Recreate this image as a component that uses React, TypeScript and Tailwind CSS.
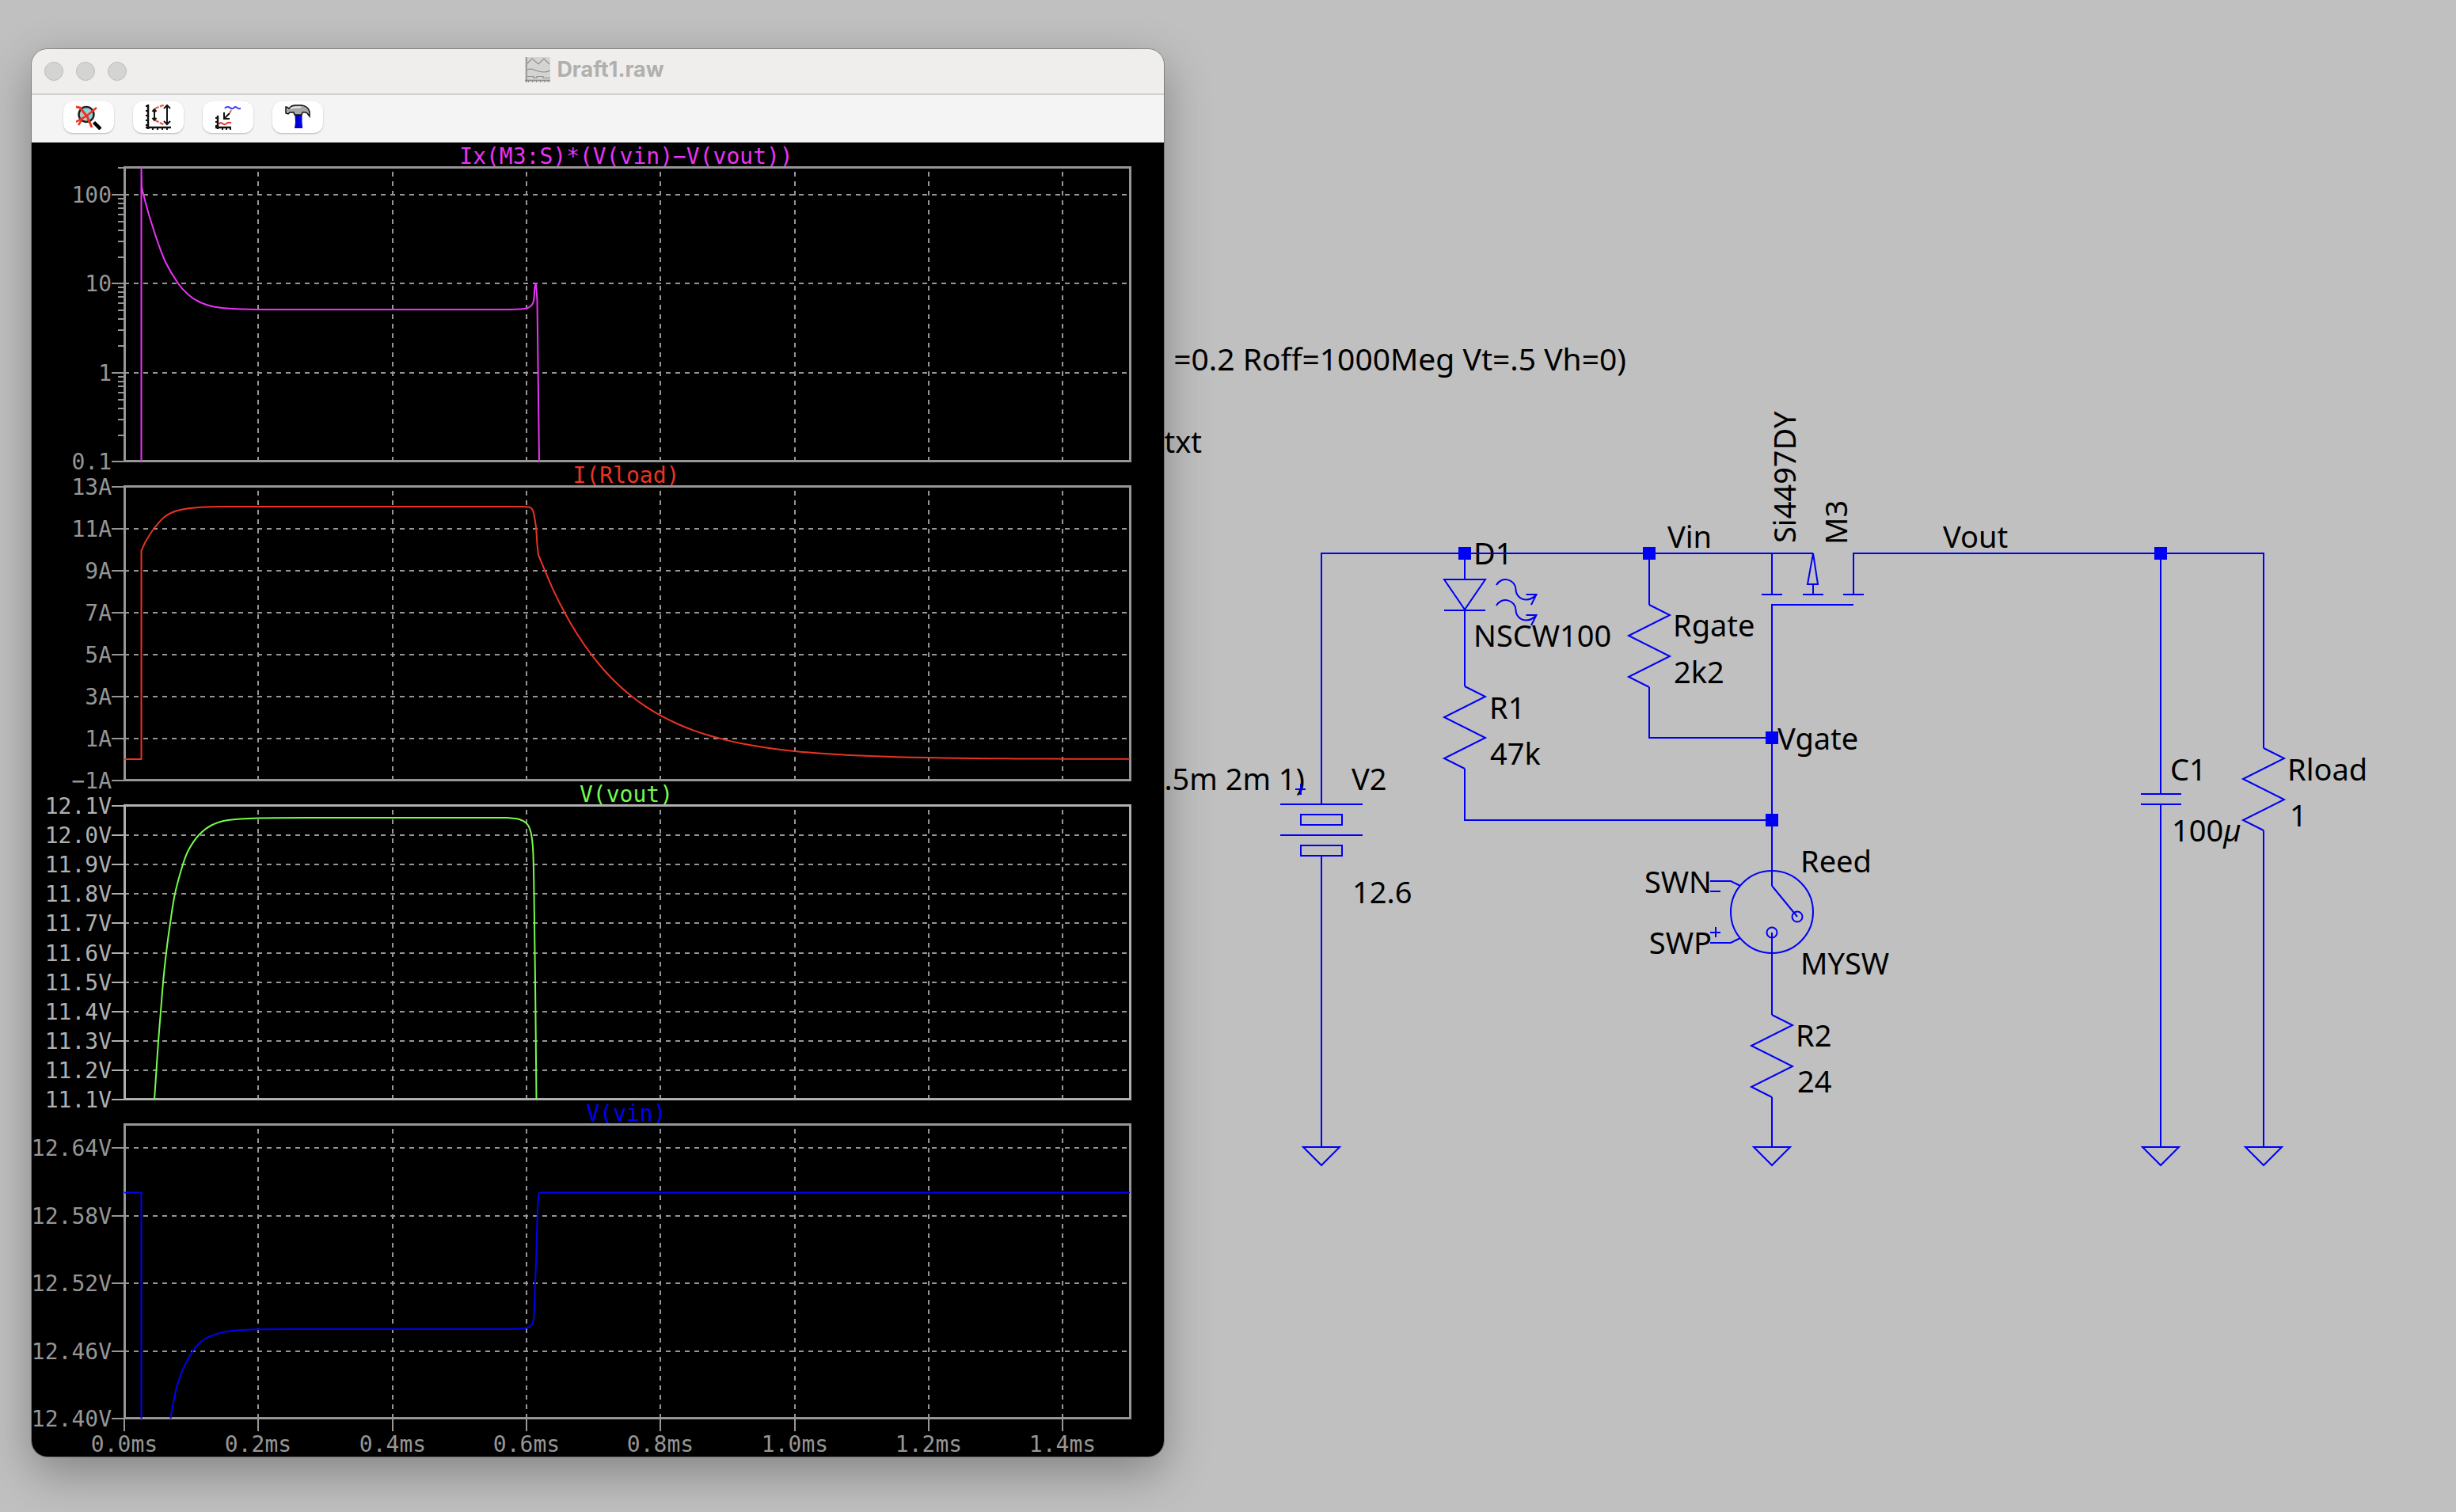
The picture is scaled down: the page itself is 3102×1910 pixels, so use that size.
import type { ReactNode } from "react";

type Point = [number, number];

type Plot = {
  title: string;
  color: string;
  frame: string;
  top: number;
  ticks: { label: string; y: number }[];
  minor?: number[];
  trace: string;
};

const LEFT = 157;
const RIGHT = 1427;
const HEIGHT = 371;
const MS = (RIGHT - LEFT) / 1.5;

// catmull-rom through the points, as cubic segments
function smooth(points: Point[]) {
  let d = "";
  for (let i = 0; i < points.length - 1; i++) {
    const a = points[i - 1] ?? points[i];
    const b = points[i];
    const c = points[i + 1];
    const e = points[i + 2] ?? c;
    d += ` L${b[0]} ${b[1]} C${b[0] + (c[0] - a[0]) / 6} ${b[1] + (c[1] - a[1]) / 6} ${
      c[0] - (e[0] - b[0]) / 6
    } ${c[1] - (e[1] - b[1]) / 6} ${c[0]} ${c[1]}`;
  }
  return d;
}

function linearTicks(labels: string[], first: number, step: number) {
  return labels.map((label, i) => ({ label, y: Math.round(first + i * step) }));
}

// load current falls off exponentially once the switch opens
const decay: Point[] = Array.from({ length: 39 }, (_, i) => {
  const x = 680 + i * 19.66;
  return [x, 959 - 258 * Math.exp((680 - x) / 100)];
});

const minorTicks = [246, 358, 471].flatMap((y) =>
  [2, 3, 4, 5, 6, 7, 8, 9].map((n) => y + 112.4 * (1 - Math.log10(n))),
);

const plots: Plot[] = [
  {
    title: "Ix(M3:S)*(V(vin)−V(vout))",
    color: "#ea33f7",
    frame: "#969696",
    top: 212,
    ticks: linearTicks(["100", "10", "1", "0.1"], 246, 112.4),
    minor: minorTicks,
    trace:
      "M178.5 583 V212 L179 236" +
      smooth([
        [179, 236], [180.5, 243], [186, 264], [193, 287], [200, 308], [210, 333], [225, 358],
        [237, 371.5], [250, 380.5], [267, 386.7], [290, 389.7], [326, 391], [400, 391],
      ]) +
      " H640" +
      smooth([[640, 391], [656, 390.5], [665, 389.5], [671, 386], [674, 380], [675.5, 363], [677, 358]]) +
      " L678.5 380 L681 583",
  },
  {
    title: "I(Rload)",
    color: "#ea3323",
    frame: "#969696",
    top: 615,
    ticks: linearTicks(["13A", "11A", "9A", "7A", "5A", "3A", "1A", "−1A"], 615, 53),
    trace:
      "M157 959 H178.5 V696" +
      smooth([
        [178.5, 696], [184.5, 683], [195, 667], [209, 652], [226, 644.5], [250, 641],
        [279, 640], [336, 640],
      ]) +
      " H656" +
      smooth([[656, 640], [668, 640.5], [672, 643], [674, 648], [677, 666], [678.5, 688], [680, 701]]) +
      smooth(decay),
  },
  {
    title: "V(vout)",
    color: "#75fb4c",
    frame: "#b0b0b0",
    top: 1018,
    ticks: linearTicks(
      ["12.1V", "12.0V", "11.9V", "11.8V", "11.7V", "11.6V", "11.5V", "11.4V", "11.3V", "11.2V", "11.1V"],
      1018,
      37.1,
    ),
    trace:
      "M195 1389" +
      smooth([
        [195, 1389], [197.5, 1352], [200, 1315], [203, 1278], [206, 1241], [210, 1203],
        [215, 1166], [221, 1129], [231, 1092], [238, 1074], [251, 1055], [267, 1042.5],
        [288, 1036], [326, 1033.5], [400, 1033],
      ]) +
      " H640" +
      smooth([
        [640, 1033], [656, 1035], [665, 1040], [669.5, 1048], [672, 1060], [673.5, 1080],
        [674.5, 1129], [676, 1241], [677.5, 1389],
      ]),
  },
  {
    title: "V(vin)",
    color: "#0000f5",
    frame: "#969696",
    top: 1421,
    ticks: linearTicks(["12.64V", "12.58V", "12.52V", "12.46V", "12.40V"], 1450, 85.5),
    trace:
      "M157 1506.5 H178.5 V1792 M215.5 1792" +
      smooth([
        [215.5, 1792], [218, 1777], [223, 1753], [231, 1730], [244, 1706], [257, 1692.5],
        [274, 1685], [293, 1681], [326, 1679.2], [400, 1679],
      ]) +
      " H640" +
      smooth([
        [640, 1679], [656, 1678.5], [665, 1677.5], [671, 1674], [674, 1665], [675.5, 1633],
        [677.5, 1580], [679, 1527], [680.5, 1509], [682, 1506.5],
      ]) +
      " H1427",
  },
];

const times = ["0.0ms", "0.2ms", "0.4ms", "0.6ms", "0.8ms", "1.0ms", "1.2ms", "1.4ms"];

function PlotPane({ plot }: { plot: Plot }) {
  const bottom = plot.top + HEIGHT;
  return (
    <g>
      <text x={791} y={plot.top - 5} textAnchor="middle" fill={plot.color}>
        {plot.title}
      </text>
      <g stroke="#969696" strokeWidth="2" strokeDasharray="6 6">
        {times.slice(1).map((t, i) => {
          const x = Math.round(LEFT + (i + 1) * 0.2 * MS);
          return <path key={t} d={`M${x} ${bottom} V${plot.top}`} />;
        })}
        {plot.ticks
          .filter((t) => t.y > plot.top + 4 && t.y < bottom - 4)
          .map((t) => (
            <path key={t.label} d={`M${LEFT} ${t.y} H${RIGHT}`} />
          ))}
      </g>
      <g stroke={plot.frame} strokeWidth="2">
        {plot.ticks.map((t) => (
          <path key={t.label} d={`M141 ${t.y} H${LEFT}`} />
        ))}
        {plot.minor?.map((y) => <path key={y} d={`M149 ${Math.round(y)} H${LEFT}`} />)}
        {plot.minor && <path d={`M149 ${plot.top} H${LEFT}`} />}
      </g>
      <g fill={plot.frame} textAnchor="end">
        {plot.ticks.map((t) => (
          <text key={t.label} x={141} y={t.y + 10}>
            {t.label}
          </text>
        ))}
      </g>
      <rect
        x={LEFT + 0.5}
        y={plot.top - 0.5}
        width={RIGHT - LEFT}
        height={HEIGHT}
        fill="none"
        stroke={plot.frame}
        strokeWidth="3"
      />
      <path d={plot.trace} fill="none" stroke={plot.color} strokeWidth="2" strokeLinejoin="round" />
    </g>
  );
}

function Waveforms() {
  return (
    <svg
      viewBox="40 180 1430 1660"
      className="block h-auto w-full bg-black font-['DejaVu_Sans_Mono',monospace] text-[28px]"
      role="img"
      aria-label="Simulation waveforms"
    >
      {plots.map((plot) => (
        <PlotPane key={plot.title} plot={plot} />
      ))}
      {times.map((t, i) => {
        const x = Math.round(LEFT + i * 0.2 * MS);
        return (
          <g key={t}>
            <path d={`M${x} 1792 V1808`} stroke="#969696" strokeWidth="2" />
            <text x={x} y={1834} textAnchor="middle" fill="#969696">
              {t}
            </text>
          </g>
        );
      })}
    </svg>
  );
}

function Resistor({ x, y }: { x: number; y: number }) {
  return <path d={`M${x} ${y} l26 13 l-52 26 l52 26 l-52 26 l26 13`} />;
}

function Ground({ x }: { x: number }) {
  return <path d={`M${x - 23} 1449 H${x + 23} L${x} 1472 Z`} />;
}

const junctions: Point[] = [
  [1850, 699],
  [2083, 699],
  [2729, 699],
  [2238, 932],
  [2238, 1036],
];

const labels: { text: string; x: number; y: number; end?: boolean }[] = [
  { text: "txt", x: 1518, y: 572, end: true },
  { text: ".5m 2m 1)", x: 1648, y: 998, end: true },
  { text: "V2", x: 1707, y: 998 },
  { text: "12.6", x: 1708, y: 1141 },
  { text: "D1", x: 1861, y: 713 },
  { text: "NSCW100", x: 1861, y: 817 },
  { text: "R1", x: 1881, y: 908 },
  { text: "47k", x: 1882, y: 966 },
  { text: "Vin", x: 2106, y: 692 },
  { text: "Rgate", x: 2113, y: 804 },
  { text: "2k2", x: 2114, y: 863 },
  { text: "Vgate", x: 2245, y: 947 },
  { text: "Vout", x: 2454, y: 692 },
  { text: "SWN", x: 2162, y: 1128, end: true },
  { text: "SWP", x: 2162, y: 1205, end: true },
  { text: "Reed", x: 2274, y: 1102 },
  { text: "MYSW", x: 2274, y: 1231 },
  { text: "R2", x: 2268, y: 1322 },
  { text: "24", x: 2270, y: 1380 },
  { text: "C1", x: 2741, y: 986 },
  { text: "Rload", x: 2889, y: 986 },
  { text: "1", x: 2892, y: 1044 },
];

function Schematic() {
  return (
    <svg
      viewBox="0 0 3102 1910"
      className="col-start-1 row-start-1 block h-auto w-full font-['Noto_Sans',sans-serif] text-[38px]"
      role="img"
      aria-label="Circuit schematic"
    >
      <g fill="#000">
        <text x={2054} y={468} textAnchor="end" className="text-[39px]">
          =0.2 Roff=1000Meg Vt=.5 Vh=0)
        </text>
        {labels.map((l) => (
          <text key={l.text} x={l.x} y={l.y} textAnchor={l.end ? "end" : "start"}>
            {l.text}
          </text>
        ))}
        <text x={2743} y={1063}>
          100<tspan fontStyle="italic">µ</tspan>
        </text>
        <text transform="translate(2268 686) rotate(-90)">Si4497DY</text>
        <text transform="translate(2333 688) rotate(-90)">M3</text>
      </g>

      <g fill="none" stroke="#0000f5" strokeWidth="2">
        {/* supply rail and battery */}
        <path d="M1669 1016 V699 H2290 M1669 1081 V1449" />
        <path d="M1617 1016 H1721 M1643 1029 H1695 V1042 H1643 Z M1617 1055 H1721 M1643 1068 H1695 V1081 H1643 Z" />
        <path d="M1636 997 H1649 M1643 990 V1004" />

        {/* D1 */}
        <path d="M1850 699 V732 M1824 732 H1876 L1850 770 Z M1824 771 H1876 M1850 770 V867" />
        {[0, 26].map((dy) => (
          <path
            key={dy}
            transform={`translate(0 ${dy})`}
            d="M1890 739 A13 13 0 0 1 1914.5 744.5 A13 13 0 0 0 1927.5 757.5 Q1935 757.5 1940.5 751 M1927.5 751 H1940.5 L1934 764"
          />
        ))}
        <Resistor x={1850} y={867} />
        <path d="M1850 971 V1036 H2238" />

        {/* gate pull-up */}
        <path d="M2083 699 V764 M2083 868 V932 H2238" />
        <Resistor x={2083} y={764} />

        {/* M3 */}
        <path d="M2238 699 V751 M2225 751 H2251 M2277 751 H2303 M2328 751 H2354 M2341 764 H2238 V1119" />
        <path d="M2290 699 L2283 738 H2296 Z M2290 738 V751 M2341 751 V699 H2859 V945" />

        {/* reed switch */}
        <circle cx="2238" cy="1152" r="52" />
        <path d="M2238 1119 L2270 1158" />
        <circle cx="2270" cy="1158" r="6.5" />
        <circle cx="2238" cy="1178" r="6.5" />
        <path d="M2160 1113 H2186 L2198 1119 M2160 1126 H2173 M2160 1191 H2186 L2198 1185 M2160 1178 H2173 M2167 1171 V1184" />
        <path d="M2238 1178 V1282 M2238 1386 V1449" />
        <Resistor x={2238} y={1282} />

        {/* output cap and load */}
        <path d="M2729 699 V1003 M2704 1003 H2755 M2704 1016 H2755 M2729 1016 V1449" />
        <Resistor x={2859} y={945} />
        <path d="M2859 1049 V1449" />

        <Ground x={1669} />
        <Ground x={2238} />
        <Ground x={2729} />
        <Ground x={2859} />
      </g>

      {junctions.map(([x, y]) => (
        <rect key={`${x}-${y}`} x={x - 8} y={y - 8} width="16" height="16" fill="#0000f5" />
      ))}
    </svg>
  );
}

function ToolButton({ label, children }: { label: string; children: ReactNode }) {
  return (
    <button
      type="button"
      aria-label={label}
      className="flex h-10 w-16 items-center justify-center rounded-xl bg-white shadow-[0_1px_2px_rgba(0,0,0,0.25)]"
    >
      <svg viewBox="0 0 32 32" className="size-8" fill="none">
        {children}
      </svg>
    </button>
  );
}

function Toolbar() {
  return (
    <div className="flex h-[60px] gap-6 bg-[#f4f4f4] pt-2 pl-10">
      <ToolButton label="Zoom to fit">
        <circle cx="13" cy="12.5" r="9.5" fill="#b8c4c6" stroke="#222" strokeWidth="2.5" />
        <path d="M8 9 L13 5 L15 8 L10 12 Z M14 16 L20 11 L21 14 L16 20 Z" fill="#5be8ee" />
        <path d="M22.5 22.5 L31 31" stroke="#000" strokeWidth="4.5" />
        <path d="M0 3 L5 4 L14 15 L20 29" stroke="#ea3323" strokeWidth="3" />
        <path d="M26 4 L14 14 L0 22 M8 18 L3 26" stroke="#ea3323" strokeWidth="2.5" />
      </ToolButton>
      <ToolButton label="Autorange Y axis">
        <path d="M3 0 V31 M0 29 H32" stroke="#111" strokeWidth="2.5" />
        <path d="M1 1 V28" stroke="#111" strokeWidth="2" strokeDasharray="2 4" />
        <path d="M8 31 H32" stroke="#111" strokeWidth="2" strokeDasharray="2 4" />
        <path d="M11 7 V19 M8.5 9 L11 6 L13.5 9 M8.5 17 L11 20 L13.5 17" stroke="#111" strokeWidth="2" />
        <path d="M27 1 V25 M23 5 L27 1 L31 5 M23 21 L27 25 L31 21" stroke="#111" strokeWidth="2" />
        <path d="M12 5 L23 0.5 M12 20 L23 25.5" stroke="#ea5a45" strokeWidth="2.2" strokeDasharray="5 1.5" />
      </ToolButton>
      <ToolButton label="Add trace">
        <path d="M12 5 Q13 3 15 3 Q18 3 20 5 Q22 6 23.5 4 Q26 2 28 4.5 Q30 6 32 4.5" stroke="#3a3af0" strokeWidth="2" />
        <path d="M18 11 L11 18 M11 10 V18 H18" stroke="#111" strokeWidth="2" />
        <path d="M20 7 L18 11" stroke="#c8705f" strokeWidth="2" />
        <path d="M3 14 V31 M0 29 H20" stroke="#111" strokeWidth="2.5" />
        <path d="M1 16 V28" stroke="#111" strokeWidth="2" strokeDasharray="2 3" />
        <path d="M8 31 H20" stroke="#111" strokeWidth="2" strokeDasharray="2 3" />
        <path d="M4 25 Q6 22 9 24 Q12 26.5 14 24 Q17 22 20 23.5" stroke="#ea3323" strokeWidth="2" />
      </ToolButton>
      <ToolButton label="Control panel">
        <path d="M12.5 13 H21.5 V23 L22 30 H12 L13 23 Z" fill="#0000c8" />
        <path d="M18 14 H21 V23 L22 30 H18 Z" fill="#0000ff" />
        <path
          d="M1 3 Q3 3 5 5 Q8 1 13 1 H21 Q29 2 31 9 V15 L28 11 Q25 9 22 10 L21 13 H12 L11 10 H6 L4 12 L1 11 Z"
          fill="#a8a8a8"
          stroke="#111"
          strokeWidth="1.5"
        />
        <path d="M7 5 Q10 3 20 3.5" stroke="#e8e8e8" strokeWidth="2" />
      </ToolButton>
    </div>
  );
}

function TitleBar() {
  return (
    <header className="flex h-[58px] items-center border-b-2 border-[#d2d1d0] bg-[#efeeec]">
      <div className="flex flex-1 gap-4 pl-4">
        {["Close", "Minimize", "Zoom"].map((name) => (
          <button
            key={name}
            type="button"
            aria-label={name}
            className="size-6 rounded-full border border-[#bcbcbb] bg-[#d4d4d3]"
          />
        ))}
      </div>
      <div className="flex items-center gap-2 pb-1">
        <svg viewBox="0 0 32 32" className="size-8" fill="none">
          <path d="M0 0 H32 V32 H0 Z" fill="#d4d4d3" />
          <path d="M2 0 V32 M0 29.5 H32" stroke="#8a8a8a" strokeWidth="1.5" />
          <path d="M3 8 L9 2 L17 9 L24 2 L31 9" stroke="#8f8f8f" strokeWidth="1.2" />
          <path d="M3 16 Q8 14 14 17 Q24 21 32 17" stroke="#8f8f8f" strokeWidth="1.2" />
          <path d="M3 24.5 H11 V26.5 H15 V24.5 H23 V26.5 H32" stroke="#8f8f8f" strokeWidth="1.2" />
          <path d="M4 31 H32" stroke="#8a8a8a" strokeWidth="2" strokeDasharray="1 4" />
        </svg>
        <h1 className="font-['Inter',sans-serif] text-[27px] leading-8 font-bold text-[#b0b0ae]">
          Draft1.raw
        </h1>
      </div>
      <div className="flex-1 pr-6" />
    </header>
  );
}

export default function App() {
  return (
    <main className="grid min-h-screen items-start overflow-hidden bg-[#c0c0c0]">
      <Schematic />
      <section className="z-10 col-start-1 row-start-1 mt-[62px] ml-10 w-[46.1%] overflow-hidden rounded-[20px] shadow-[0_0_0_1px_rgba(0,0,0,0.25),0_20px_60px_rgba(0,0,0,0.32)]">
        <TitleBar />
        <Toolbar />
        <Waveforms />
      </section>
    </main>
  );
}
